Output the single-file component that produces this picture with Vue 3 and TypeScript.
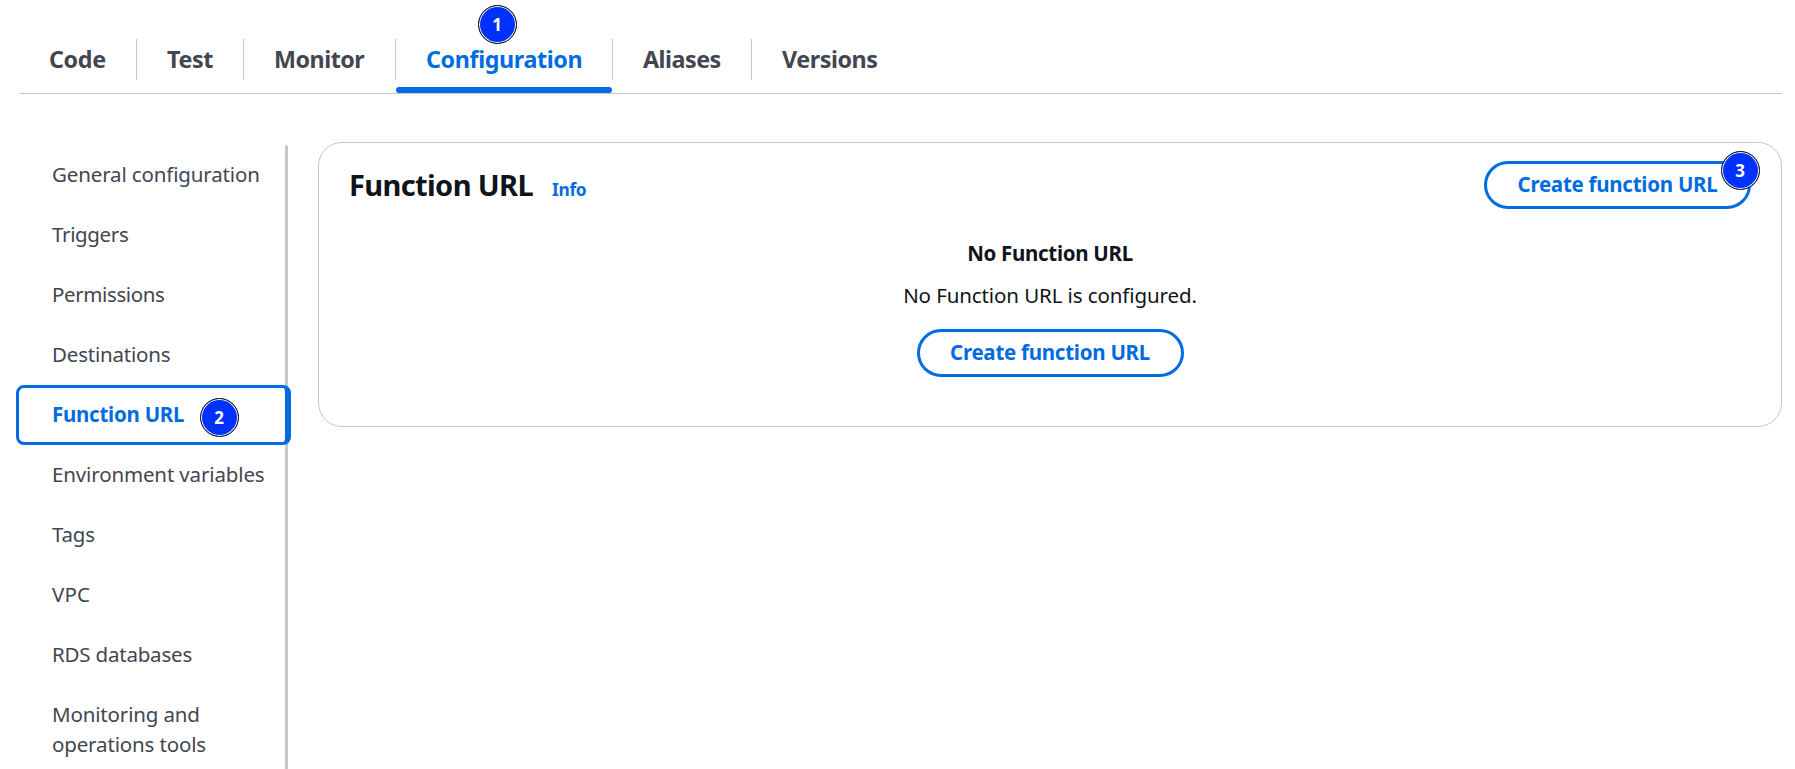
<script setup lang="ts">
interface TextItem {
  label: string
  spacing: number
}
interface Tab extends TextItem {
  width: number
  active?: boolean
  marker?: number
}
interface NavItem extends TextItem {
  active?: boolean
  marker?: number
}

const tabs: Tab[] = [
  { label: 'Code', spacing: -0.35, width: 118 },
  { label: 'Test', spacing: -0.37, width: 107 },
  { label: 'Monitor', spacing: -0.5, width: 152 },
  { label: 'Configuration', spacing: -0.38, width: 217, active: true, marker: 1 },
  { label: 'Aliases', spacing: -0.5, width: 139 },
  { label: 'Versions', spacing: -0.45, width: 160 },
]

const navItems: NavItem[] = [
  { label: 'General configuration', spacing: -0.14 },
  { label: 'Triggers', spacing: -0.35 },
  { label: 'Permissions', spacing: -0.38 },
  { label: 'Destinations', spacing: -0.2 },
  { label: 'Function URL', spacing: -0.26, active: true, marker: 2 },
  { label: 'Environment variables', spacing: -0.14 },
  { label: 'Tags', spacing: -0.2 },
  { label: 'VPC', spacing: 0.2 },
  { label: 'RDS databases', spacing: -0.2 },
  { label: 'Monitoring and operations tools', spacing: -0.15 },
]
</script>

<template>
  <div class="page">
    <nav class="tabs">
      <a v-for="tab in tabs" :key="tab.label" class="tab" :class="{ active: tab.active }" :style="{ width: tab.width + 'px' }">
        <span :style="{ letterSpacing: tab.spacing + 'px' }">{{ tab.label }}</span>
        <b v-if="tab.marker" class="marker marker-tab">{{ tab.marker }}</b>
      </a>
    </nav>

    <div class="content">
      <aside class="side">
        <a v-for="item in navItems" :key="item.label" class="side-item" :class="{ active: item.active }">
          <span :style="{ letterSpacing: item.spacing + 'px' }">{{ item.label }}</span>
          <b v-if="item.marker" class="marker marker-side">{{ item.marker }}</b>
        </a>
      </aside>

      <section class="card">
        <header class="card-head">
          <h2>Function URL</h2>
          <a class="info">Info</a>
          <button class="btn" type="button">
            Create function URL
            <b class="marker marker-btn">3</b>
          </button>
        </header>
        <div class="empty">
          <strong>No Function URL</strong>
          <p>No Function URL is configured.</p>
          <button class="btn" type="button">Create function URL</button>
        </div>
      </section>
    </div>
  </div>
</template>

<style>
body {
  margin: 0;
  background: #fff;
}
</style>

<style scoped>
.page {
  box-sizing: border-box;
  height: 769px;
  padding: 39px 13px 0 19px;
  overflow: hidden;
  background: #fff;
  color: #0f141a;
  font: 20.5px/30px 'Noto Sans', 'Open Sans', sans-serif;
}
.page * {
  box-sizing: border-box;
}
.tabs {
  display: flex;
  height: 55px;
  border-bottom: 1px solid #c6c6cd;
}
.tab {
  position: relative;
  height: 41px;
  padding: 5px 0 0 30px;
  border-right: 1px solid #c6c6cd;
  color: #424650;
  font-size: 23.3px;
  font-weight: 700;
  white-space: nowrap;
}
.tab:last-child {
  border-right: 0;
}
.tab.active {
  color: #006ce0;
}
.tab.active::after {
  content: '';
  position: absolute;
  left: 0;
  right: 0;
  top: 48px;
  height: 6px;
  border-radius: 3px;
  background: #006ce0;
}
.content {
  display: flex;
  align-items: flex-start;
  padding-top: 48px;
}
.side {
  flex: none;
  width: 269px;
  height: 627px;
  margin-top: 3px;
  border-right: 3px solid #c6c6cd;
  border-radius: 2px;
}
.side-item {
  position: relative;
  display: block;
  min-height: 60px;
  padding: 14px 20px 16px 33px;
  color: #424650;
}
.side-item.active {
  color: #006ce0;
  font-weight: 700;
}
.side-item.active::before {
  content: '';
  position: absolute;
  inset: 0 -6px 0 -3px;
  border: 3px solid #006ce0;
  border-right-width: 6px;
  border-radius: 8px;
}
.card {
  flex: 1;
  height: 285px;
  margin-left: 30px;
  border: 1px solid #c6c6cd;
  border-radius: 24px;
}
.card-head {
  display: flex;
  align-items: flex-start;
  height: 84px;
  padding: 18px 30px 0;
}
h2 {
  margin: 6px 0 0;
  font-size: 29px;
  line-height: 36px;
  letter-spacing: -0.62px;
}
.info {
  margin: 14px 0 0 19px;
  color: #006ce0;
  font-size: 17.3px;
  font-weight: 700;
  letter-spacing: -0.3px;
}
.btn {
  position: relative;
  width: 267px;
  height: 48px;
  padding: 0 0 2px;
  border: 3px solid #006ce0;
  border-radius: 24px;
  background: #fff;
  color: #006ce0;
  font: 700 20.5px/30px 'Noto Sans', 'Open Sans', sans-serif;
  letter-spacing: -0.26px;
}
.card-head .btn {
  margin-left: auto;
}
.empty {
  display: flex;
  flex-direction: column;
  align-items: center;
  padding-top: 11px;
}
strong {
  letter-spacing: -0.3px;
}
p {
  margin: 12px 0 19px;
  letter-spacing: -0.1px;
}
.marker {
  position: absolute;
  width: 39px;
  height: 39px;
  border: 1px solid #111;
  border-radius: 50%;
  background: #0031ff;
  box-shadow: inset 0 0 0 1px #fff;
  color: #fff;
  font: 700 17px/37px 'Noto Sans', 'Open Sans', sans-serif;
  text-align: center;
}
.marker-tab {
  left: 81.5px;
  top: -34.5px;
}
.marker-side {
  left: 180.5px;
  top: 12.5px;
}
.marker-btn {
  left: 233.5px;
  top: -13.5px;
}
</style>
